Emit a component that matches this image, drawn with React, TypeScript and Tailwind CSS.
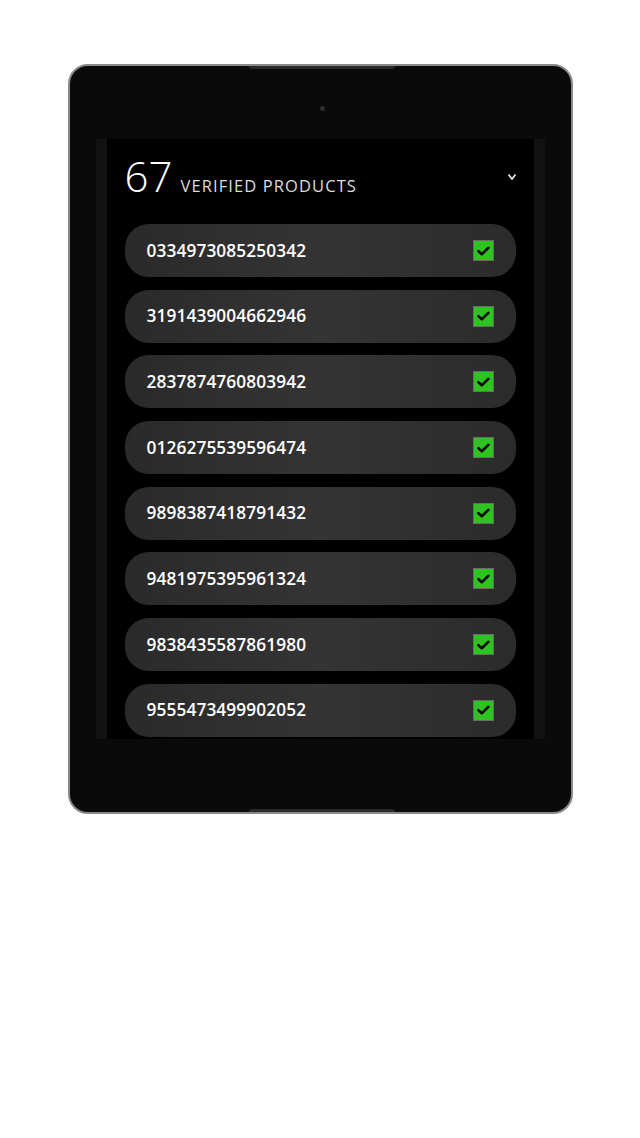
import React from 'react';

const products = [
    '0334973085250342',
    '3191439004662946',
    '2837874760803942',
    '0126275539596474',
    '9898387418791432',
    '9481975395961324',
    '9838435587861980',
    '9555473499902052',
];

function CheckBox() {
    return (
        <div className="w-[21px] h-[21px] bg-[#2ec41f] border border-[#6b6b6b] flex items-center justify-center">
            <svg width="13" height="10" viewBox="0 0 13 10" fill="none">
                <path d="M1.5 5.2 L4.8 8.2 L11.5 1.8" stroke="#0b0b0b" strokeWidth="2.6" strokeLinecap="round" strokeLinejoin="round" />
            </svg>
        </div>
    );
}

export default function App() {
    return (
        <div className="min-h-[1138px] bg-white pt-[64px] flex justify-center" style={{ fontFamily: '"Open Sans", "Noto Sans", sans-serif' }}>
            {/* Tablet frame */}
            <div className="relative w-[505px] h-[750px] rounded-[20px] border-2 border-[#8a8a8a] bg-[#0a0a0a] pt-[73px] px-[26px]">
                {/* top + bottom notches */}
                <div className="absolute top-0 left-[179px] w-[146px] h-[3px] bg-[#2a2a2a] rounded-b-[3px]" />
                <div className="absolute bottom-0 left-[179px] w-[146px] h-[3px] bg-[#2a2a2a] rounded-t-[3px]" />
                {/* camera */}
                <div className="absolute top-[40px] left-[250px] w-[5px] h-[5px] rounded-full bg-[#2e2e2e]" />

                {/* Screen */}
                <div className="h-[600px] bg-[#121212] px-[11px] overflow-hidden">
                    <div className="h-full bg-black px-[18px] overflow-hidden">
                        <div className="h-[85px] flex items-center justify-between pb-[12px]">
                            <div className="flex items-baseline gap-[8px]">
                                <span className="text-[42px] font-light text-white leading-none">67</span>
                                <span className="text-[16.5px] text-[#dcdcdc] tracking-[1.1px] leading-none">VERIFIED PRODUCTS</span>
                            </div>
                            <svg width="10" height="8" viewBox="0 0 10 8" className="mr-[-1px] mt-[2px]">
                                <path d="M1.5 1.5 L5 6 L8.5 1.5" stroke="#e5e5e5" strokeWidth="1.8" fill="none" strokeLinejoin="round" />
                            </svg>
                        </div>

                        <div className="flex flex-col gap-[12.7px]">
                            {products.map((code) => (
                                <div
                                    key={code}
                                    className="h-[53px] shrink-0 rounded-[24px] bg-gradient-to-r from-[#2a2a2a] via-[#343434] to-[#2b2b2b] flex items-center justify-between pl-[22px] pr-[22px]"
                                >
                                    <span className="text-[17.3px] font-semibold text-white tracking-[0.1px]">{code}</span>
                                    <CheckBox />
                                </div>
                            ))}
                        </div>
                    </div>
                </div>
            </div>
        </div>
    );
}
